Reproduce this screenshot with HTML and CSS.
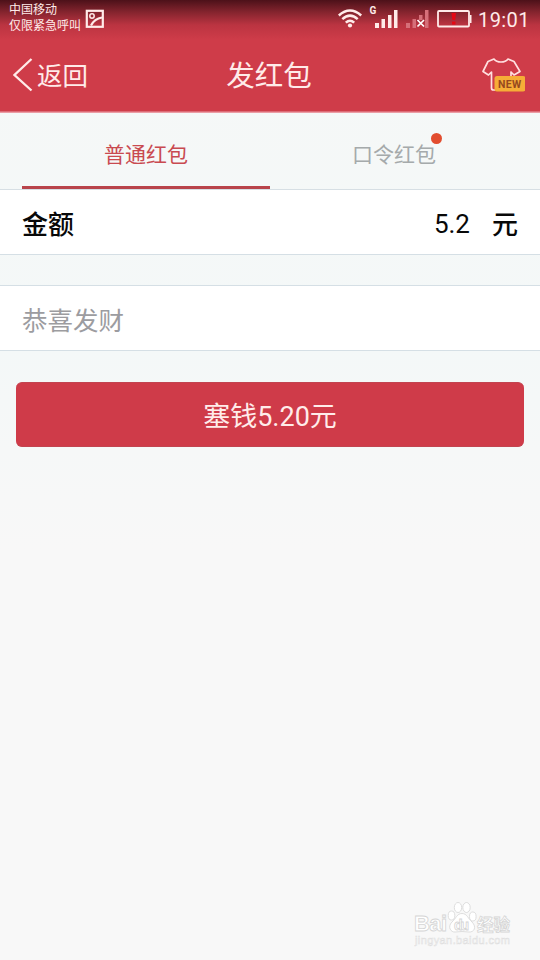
FILE: index.html
```html
<!DOCTYPE html>
<html lang="zh-CN">
<head>
<meta charset="utf-8">
<title>发红包</title>
<link rel="stylesheet" href="styles.css">
</head>
<body>
<div class="screen">
  <header class="top">
    <div class="status">
      <div class="carrier"><span>中国移动</span><span>仅限紧急呼叫</span></div>
      <svg class="picture" width="20" height="20" viewBox="0 0 20 20" fill="none" stroke="#ffebe9" stroke-width="2.200"><rect x="1.800" y="1.800" width="16" height="16"/><circle cx="7" cy="7" r="2.200" stroke-width="1.500"/><path d="M6 16.500C8 12.500 11 9.500 17 8.500"/></svg>
      <svg class="signals" width="136" height="32" viewBox="0 0 136 32">
        <g fill="none" stroke="#ffebe9" stroke-width="2.500"><path d="M.8 15.500Q12 5.500 23.200 15.500"/><path d="M4.300 19.200Q12 12 19.700 19.200"/><path d="M7.800 22.700Q12 18.700 16.200 22.700"/></g>
        <circle cx="12" cy="25.500" r="2.100" fill="#ffebe9"/>
        <text class="network" x="31.500" y="13.500">G</text>
        <path fill="#ffebe9" d="M37 23h4v5h-4zM43.500 19h3.500v9h-3.500zM50 15h3.500v13h-3.500zM56 10h3.500v18h-3.500z"/>
        <path fill="#d66f79" d="M68 23h4v5h-4zM74.500 19h3.500v9h-3.500zM81 15h3.500v5h-3.500zM87 10h3.500v18h-3.500z"/>
        <path d="m79.500 20 6.500 6.500m0-6.500-6.500 6.500" stroke="#fff" stroke-width="1.700"/>
        <rect x="100" y="11" width="31" height="15.500" rx="1" fill="none" stroke="#ffebe9" stroke-width="1.800"/>
        <path d="M132 15h1.500v8H132z" fill="#ffebe9"/>
        <path d="M113.500 13h4.500l-.8 7h-2.900zM114 21.500h3.500v3h-3.500z" fill="#e50814"/>
      </svg>
      <span class="clock">19:01</span>
    </div>
    <nav class="titlebar">
      <a class="back"><svg width="20" height="34" viewBox="0 0 20 34" fill="none" stroke="#ffebe9" stroke-width="2.300"><path d="M18.500 1 1.500 17l17 15.500"/></svg><span>返回</span></a>
      <h1>发红包</h1>
      <a class="shirt"><svg width="44" height="36" viewBox="0 0 44 36"><path d="M13 2C16 6 24 6 27 2l6 2.500 6 10-6 3.500-3-3v18H12.500q-2 0-2-2V15l-3 3L2 14.500l5-10z" fill="none" stroke="#ffdfdf" stroke-width="1.700" stroke-linejoin="round"/><rect x="13.500" y="19" width="31" height="15.500" rx="2.500" fill="#f6ad37"/><text class="new" x="28.800" y="30.700" text-anchor="middle">NEW</text></svg></a>
    </nav>
  </header>
  <div class="tabs">
    <div class="tab active"><span>普通红包</span></div>
    <div class="tab"><span>口令红包<i class="dot"></i></span></div>
  </div>
  <div class="row amount"><span class="label">金额</span><span class="value">5.2</span><span class="unit">元</span></div>
  <div class="row message">恭喜发财</div>
  <div class="submit">塞钱5.20元</div>
  <div class="watermark">
    <svg width="100" height="50" viewBox="0 0 100 50">
      <g class="mark"><text class="brand" x="0" y="34" textLength="33">Bai</text>
      <ellipse cx="37.500" cy="18.500" rx="3.300" ry="4.500"/><ellipse cx="44" cy="10.500" rx="3.700" ry="5"/><ellipse cx="52.500" cy="10.500" rx="3.700" ry="5"/><ellipse cx="58.800" cy="19.500" rx="3.300" ry="4.500"/>
      <path d="M48 16.500c-5 0-6 5-10 8.500-5 5-1 10.500 3 10q7-1 14 0c5 .5 8-5 3-10-4-3.500-5-8.500-10-8.500z"/>
      <text class="du" x="40" y="32.500" textLength="15">du</text>
      <text class="exp" x="63" y="33.500">经验</text></g>
      <text class="url" x="1" y="47" textLength="95">jingyan.baidu.com</text>
    </svg>
  </div>
</div>
</body>
</html>
```
FILE: styles.css
```css
* { box-sizing: border-box; }
body { margin: 0; font-family: Roboto, "Noto Sans CJK SC", sans-serif; }
.screen { width: 540px; height: 960px; display: flex; flex-direction: column; background: linear-gradient(#f6f8f7 0, #f4f8f8 350px, #f8f8f8 550px); overflow: hidden; }
.top { height: 113px; flex: none; background: linear-gradient(#4c1119 0, #84242e 12px, #bb3441 25px, #cf3c49 40px, #cf3c49 111px, #eb9da5 112px); color: #ffebe9; }
.status { height: 38px; display: flex; }
.carrier { width: 76px; margin-left: 9px; padding-top: 2px; font-size: 12px; line-height: 16px; display: flex; flex-direction: column; white-space: nowrap; }
.picture { margin-top: 9px; }
.signals { margin: 0 0 0 233px; flex: none; }
.network { font: bold 10px Roboto, sans-serif; fill: #ffebe9; }
.clock { font-size: 20px; line-height: 40px; margin-left: 4px; letter-spacing: .4px; }
.titlebar { height: 74px; display: grid; grid-template-columns: 1fr auto 1fr; grid-template-rows: 74px; align-items: center; padding: 0 15px 0 13px; }
.back { display: flex; align-items: center; font-size: 25.500px; gap: 4px; }
.back span { line-height: 34px; padding-top: 2px; }
h1 { margin: 0; height: 74px; font-size: 28.500px; font-weight: 400; line-height: 78px; }
.shirt { justify-self: end; display: flex; }
.new { font: bold 10.500px Roboto, sans-serif; fill: #96491f; letter-spacing: .3px; }
.tabs { height: 77px; flex: none; display: grid; grid-template-columns: 1fr 1fr; padding: 0 22px; border-bottom: 1px solid #d7dfe4; }
.tab { display: flex; justify-content: center; font-size: 21px; line-height: 84px; height: 76px; color: #a5aaab; }
.tab span { position: relative; height: 76px; }
.active { color: #c94a50; border-bottom: 3px solid #b9444b; }
.dot { position: absolute; width: 11px; height: 11px; border-radius: 50%; background: #e24d2f; right: -6px; top: 20px; }
.row { height: 65px; flex: none; display: flex; align-items: center; padding: 0 22px; background: #fff; border-bottom: 1px solid #d5dfe5; font-size: 26px; }
.label { flex: 1; }
.amount { color: #080808; }
.label, .unit { font-weight: 500; }
.value { padding-top: 3px; }
.unit { margin-left: 22px; padding-top: 1px; }
.message { height: 66px; margin-top: 30px; border-top: 1px solid #d5dfe5; color: #9c9ca0; font-size: 25.500px; }
.submit { flex: none; height: 65px; margin: 31px 16px 0 16px; border-radius: 6px; background: #cf3b49; border-top: 1px solid #c24450; border-bottom: 1px solid #c24450; color: #ffecea; font-size: 27px; line-height: 68px; text-align: center; }
.watermark { margin: auto 26px 13px auto; height: 50px; }
.mark { fill: #fff; stroke: #d5d5d5; stroke-width: .8px; }
.brand { font: bold 22px "Liberation Sans", sans-serif; }
.du { font: bold 14px "Liberation Sans", sans-serif; }
.exp { font: bold 16.500px "Noto Sans CJK SC", sans-serif; }
.url { font: 11px "Liberation Sans", sans-serif; fill: #fafafa; stroke: #dedede; stroke-width: .5px; }
```
